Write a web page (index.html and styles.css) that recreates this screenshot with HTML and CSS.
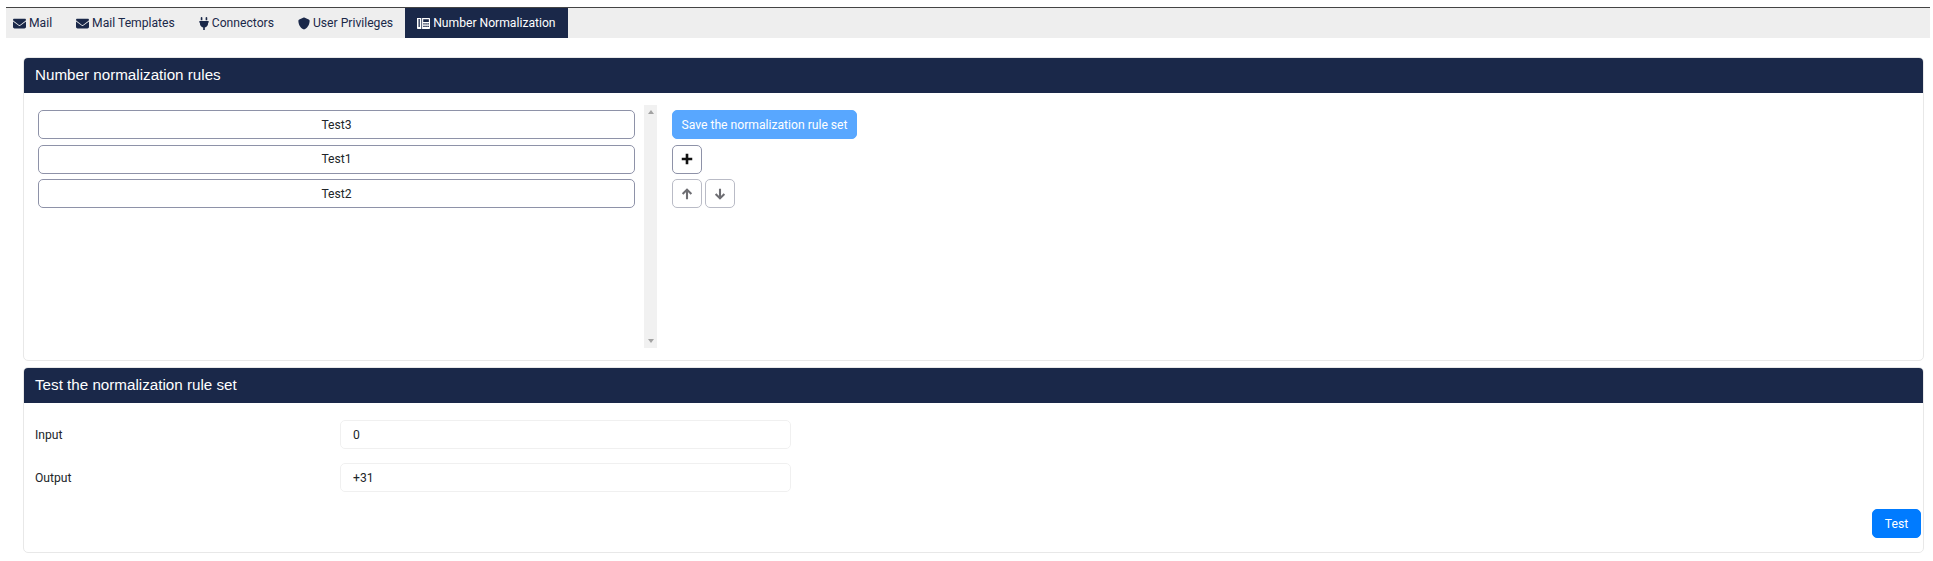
FILE: index.html
```html
<!DOCTYPE html>
<html lang="en">
<head>
    <meta charset="UTF-8">
    <title>Number Normalization</title>
    <link rel="stylesheet" href="styles.css">
</head>
<body>
    <nav class="tabs">
        <a class="tab first">
            <svg class="tab-icon" viewBox="0 0 512 512"><path d="M48 64C21.5 64 0 85.500 0 112c0 15.100 7.100 29.300 19.200 38.400L236.800 313.600c11.400 8.500 27 8.500 38.400 0L492.800 150.400c12.100-9.100 19.200-23.300 19.200-38.400 0-26.500-21.500-48-48-48H48zM0 176V384c0 35.300 28.700 64 64 64H448c35.300 0 64-28.700 64-64V176L294.400 339.200c-22.800 17.100-54 17.100-76.800 0L0 176z"/></svg>
            Mail
        </a>
        <a class="tab">
            <svg class="tab-icon" viewBox="0 0 512 512"><path d="M48 64C21.500 64 0 85.500 0 112c0 15.100 7.100 29.300 19.200 38.400L236.800 313.600c11.400 8.500 27 8.500 38.400 0L492.800 150.400c12.100-9.100 19.200-23.300 19.200-38.400 0-26.500-21.500-48-48-48H48zM0 176V384c0 35.300 28.700 64 64 64H448c35.300 0 64-28.700 64-64V176L294.400 339.200c-22.800 17.100-54 17.100-76.800 0L0 176z"/></svg>
            Mail Templates
        </a>
        <a class="tab">
            <svg class="tab-icon plug" viewBox="0 0 384 512"><path d="M96 0C78.300 0 64 14.300 64 32v96h64V32c0-17.700-14.300-32-32-32zM288 0c-17.700 0-32 14.300-32 32v96h64V32c0-17.700-14.300-32-32-32zM32 160c-17.700 0-32 14.300-32 32s14.300 32 32 32v32c0 77.400 55 142 128 156.800V512h64V412.800C297 398 352 333.400 352 256V224c17.700 0 32-14.300 32-32s-14.300-32-32-32H32z"/></svg>
            Connectors
        </a>
        <a class="tab">
            <svg class="tab-icon shield" viewBox="0 0 512 512"><path d="M256 0c4.600 0 9.200 1 13.400 2.900L457.700 82.800c22 9.300 38.400 31 38.300 57.200-.5 99.200-41.300 280.700-213.600 363.200-16.700 8-36.100 8-52.800 0C57.300 420.700 16.500 239.200 16 140c-.1-26.200 16.300-47.900 38.300-57.200L242.700 2.900C246.800 1 251.400 0 256 0z"/></svg>
            User Privileges
        </a>
        <a class="tab active">
            <svg class="tab-icon" viewBox="0 0 512 512"><path fill-rule="evenodd" d="M0 40h170v432H30c-16.600 0-30-13.400-30-30V40zm60 40v312h50V80H60zM200 40h282c16.600 0 30 13.400 30 30v372c0 16.600-13.400 30-30 30H200V40zm45 50v110h222V90H245zm0 155v55h60v-55h-60zm81 0v55h60v-55h-60zm81 0v55h60v-55h-60zM245 340v55h60v-55h-60zm81 0v55h60v-55h-60zm81 0v55h60v-55h-60z"/></svg>
            Number Normalization
        </a>
    </nav>

    <main class="content">
        <section class="card card-rules">
            <h2 class="card-header">Number normalization rules</h2>
            <div class="rules-body">
                <div class="rule-list">
                    <button class="rule">Test3</button>
                    <button class="rule">Test1</button>
                    <button class="rule">Test2</button>
                </div>
                <div class="scrollbar">
                    <span class="arrow-up"></span>
                    <span class="arrow-down"></span>
                </div>
                <div class="rule-actions">
                    <div><button class="btn-save">Save the normalization rule set</button></div>
                    <div><button class="btn-icon btn-add">
                        <svg viewBox="0 0 16 16"><path d="M8 2v12M2 8h12"/></svg>
                    </button></div>
                    <div class="move-row">
                        <button class="btn-icon btn-move">
                            <svg viewBox="0 0 16 16"><path d="M8 14V3M3 8l5-5 5 5"/></svg>
                        </button>
                        <button class="btn-icon btn-move">
                            <svg viewBox="0 0 16 16"><path d="M8 2v11M3 8l5 5 5-5"/></svg>
                        </button>
                    </div>
                </div>
            </div>
        </section>

        <section class="card card-test">
            <h2 class="card-header">Test the normalization rule set</h2>
            <div class="test-body">
                <div class="field">
                    <label class="field-label" for="input">Input</label>
                    <input class="field-input" id="input" type="text" value="0">
                </div>
                <div class="field">
                    <label class="field-label" for="output">Output</label>
                    <input class="field-input" id="output" type="text" value="+31">
                </div>
                <div class="test-footer">
                    <button class="btn-test">Test</button>
                </div>
            </div>
        </section>
    </main>
</body>
</html>
```

FILE: styles.css
```css
* {
    box-sizing: border-box;
}
body {
    margin: 0;
    padding: 7px 3px 0 6px;
    background-color: #fff;
    font-family: Roboto, sans-serif;
    font-size: 12.150px;
    color: #212529;
}
button {
    font-family: Roboto, sans-serif;
    font-size: 12.150px;
    cursor: pointer;
}
.tabs {
    display: flex;
    height: 31px;
    border-top: 1px solid #444;
    background-color: #eee;
}
.tab {
    display: flex;
    align-items: center;
    gap: 3px;
    padding: 0 12px;
    color: #1a2849;
    white-space: nowrap;
}
.tab.first {
    padding-left: 7px;
}
.tab.active {
    background-color: #1a2849;
    color: #fff;
}
.tab-icon {
    width: 13px;
    height: 13px;
    fill: currentColor;
}
.tab-icon.plug {
    width: 10px;
}
.tab-icon.shield {
    width: 12px;
}
.content {
    padding: 19px 6px 0 17px;
    display: flex;
    flex-direction: column;
    gap: 6px;
}
.card {
    border: 1px solid #e8e8e8;
    border-radius: 5px;
    background: #fff;
    overflow: hidden;
}
.card-rules {
    height: 304px;
}
.card-test {
    height: 186px;
}
.card-header {
    margin: -1px -1px 0;
    height: 36px;
    padding: 0 12px 2px;
    display: flex;
    align-items: center;
    background-color: #1a2849;
    color: #fff;
    font-family: "Liberation Sans", Arial, sans-serif;
    font-size: 15.200px;
    font-weight: 400;
}
.rules-body {
    display: flex;
    padding: 12px 0 0 14px;
}
.rule-list {
    width: 597px;
    padding-top: 5px;
    display: flex;
    flex-direction: column;
    gap: 5.500px;
}
.rule {
    height: 29px;
    background: #fff;
    border: 1px solid #8e92a8;
    border-radius: 5px;
    color: #212529;
}
.scrollbar {
    position: relative;
    width: 13px;
    height: 243px;
    margin-left: 9px;
    background-color: #f1f1f1;
}
.arrow-up, .arrow-down {
    position: absolute;
    left: 3.500px;
    width: 0;
    height: 0;
    border-left: 3px solid transparent;
    border-right: 3px solid transparent;
}
.arrow-up {
    top: 5px;
    border-bottom: 4px solid #a3a3a3;
}
.arrow-down {
    bottom: 5px;
    border-top: 4px solid #a3a3a3;
}
.rule-actions {
    margin-left: 15px;
    padding-top: 5px;
    display: flex;
    flex-direction: column;
    gap: 5.500px;
}
.btn-save {
    height: 29px;
    width: 185px;
    padding: 0;
    background-color: #58a7ff;
    border: 1px solid #58a7ff;
    border-radius: 5px;
    color: #fff;
}
.btn-icon {
    display: flex;
    align-items: center;
    justify-content: center;
    width: 30px;
    height: 29px;
    padding: 0;
    background: #fff;
    border-radius: 5px;
}
.btn-icon svg {
    width: 14px;
    height: 14px;
    fill: none;
    stroke: currentColor;
    stroke-width: 2.400;
}
.btn-add {
    border: 1px solid #8e92a8;
    color: #111;
}
.btn-add svg {
    stroke-width: 3;
}
.btn-move {
    border: 1px solid #b9bbc6;
    color: #6e6e73;
}
.move-row {
    display: flex;
    gap: 3px;
}
.test-body {
    padding: 17px 2px 0 11px;
}
.field {
    display: flex;
    align-items: center;
    height: 29px;
    margin-bottom: 14px;
}
.field-label {
    width: 305px;
}
.field-input {
    width: 451px;
    height: 29px;
    padding: 0 12px;
    border: 1px solid #f0f0f0;
    border-radius: 5px;
    font-family: Roboto, sans-serif;
    font-size: 12.150px;
    color: #212529;
}
.test-footer {
    display: flex;
    justify-content: flex-end;
    margin-top: 17px;
}
.btn-test {
    width: 49px;
    height: 29px;
    padding: 0;
    background-color: #007bff;
    border: 1px solid #007bff;
    border-radius: 5px;
    color: #fff;
}
```
